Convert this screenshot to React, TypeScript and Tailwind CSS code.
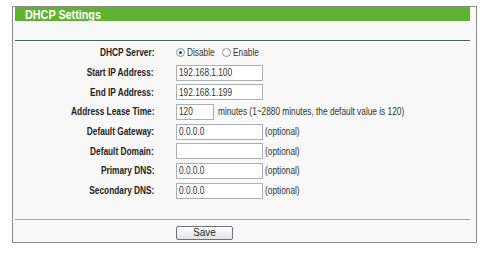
import React from 'react';

const FONT = { fontFamily: '"Liberation Sans", Arial, sans-serif' };

const ROWS: { label: string; value?: string; kind: 'radio' | 'input' | 'lease'; note?: string }[] = [
  { label: 'DHCP Server:', kind: 'radio' },
  { label: 'Start IP Address:', value: '192.168.1.100', kind: 'input' },
  { label: 'End IP Address:', value: '192.168.1.199', kind: 'input' },
  { label: 'Address Lease Time:', value: '120', kind: 'lease' },
  { label: 'Default Gateway:', value: '0.0.0.0', kind: 'input', note: '(optional)' },
  { label: 'Default Domain:', value: '', kind: 'input', note: '(optional)' },
  { label: 'Primary DNS:', value: '0.0.0.0', kind: 'input', note: '(optional)' },
  { label: 'Secondary DNS:', value: '0.0.0.0', kind: 'input', note: '(optional)' },
];

// the screenshot text is horizontally squeezed, so text spans get a narrow scale
const NARROW_L = 'inline-block whitespace-nowrap origin-left scale-x-[0.83]';
const NARROW_R = 'inline-block whitespace-nowrap origin-right scale-x-[0.83]';

function Radio({ checked, label, width }: { checked?: boolean; label: string; width: string }) {
  return (
    <span className="flex items-center">
      <span className="w-[9px] h-[9px] rounded-full border border-[#8d9399] bg-white flex items-center justify-center">
        {checked && <span className="w-[3px] h-[3px] rounded-full bg-[#3a4a3a]" />}
      </span>
      <span className={`ml-[2px] ${width} text-[#333]`}>
        <span className={NARROW_L}>{label}</span>
      </span>
    </span>
  );
}

function Field({ value, width }: { value: string; width: string }) {
  return (
    <div className={`${width} h-[16px] border border-[#a9b0b6] bg-white pl-[2px] flex items-center text-[#333] text-[10px] overflow-hidden`}>
      <span className={NARROW_L}>{value}</span>
    </div>
  );
}

export default function App() {
  return (
    <div className="w-[500px] h-[253px] bg-white pt-[6px] pl-[12px]" style={FONT}>
      <div className="w-[465px] h-[237px] border border-[#8c8c8c] bg-[#f9f9f9] pl-[2px] pr-[6px] flex flex-col">
        {/* Header */}
        <div className="h-[14px] bg-[#62b232] flex items-center pl-[10px]">
          <span className={`${NARROW_L} text-white font-bold text-[13px] leading-none`}>DHCP Settings</span>
        </div>

        <div className="mt-[19px] h-px bg-[#4c5e5a]" />

        {/* Rows */}
        <div className="mt-[2px] flex flex-col">
          {ROWS.map((row) => (
            <div key={row.label} className="h-[19.7px] flex items-center text-[10px]">
              <div className="w-[139px] text-right font-bold text-[#222]">
                <span className={NARROW_R}>{row.label}</span>
              </div>
              <div className="ml-[22px] flex items-center">
                {row.kind === 'radio' && (
                  <div className="flex items-center">
                    <Radio checked label="Disable" width="w-[35px]" />
                    <Radio label="Enable" width="w-[30px]" />
                  </div>
                )}
                {row.kind === 'input' && (
                  <>
                    <Field value={row.value ?? ''} width="w-[87px]" />
                    {row.note && (
                      <span className="ml-[2px] text-[#333]">
                        <span className={NARROW_L}>{row.note}</span>
                      </span>
                    )}
                  </>
                )}
                {row.kind === 'lease' && (
                  <>
                    <Field value={row.value ?? ''} width="w-[38px]" />
                    <span className="ml-[4px] text-[#333]">
                      <span className={NARROW_L}>minutes (1~2880 minutes, the default value is 120)</span>
                    </span>
                  </>
                )}
              </div>
            </div>
          ))}
        </div>

        <div className="mt-[18px] h-px bg-[#86b496]" />

        {/* Save */}
        <div className="mt-[6px] pl-[161px]">
          <button className="w-[57px] h-[14px] rounded-[2px] border border-[#6f7378] bg-gradient-to-b from-white to-[#e4e4e4] text-[11px] leading-none text-[#222] flex items-center justify-center">
            <span className="inline-block scale-x-[0.9]">Save</span>
          </button>
        </div>
      </div>
    </div>
  );
}
